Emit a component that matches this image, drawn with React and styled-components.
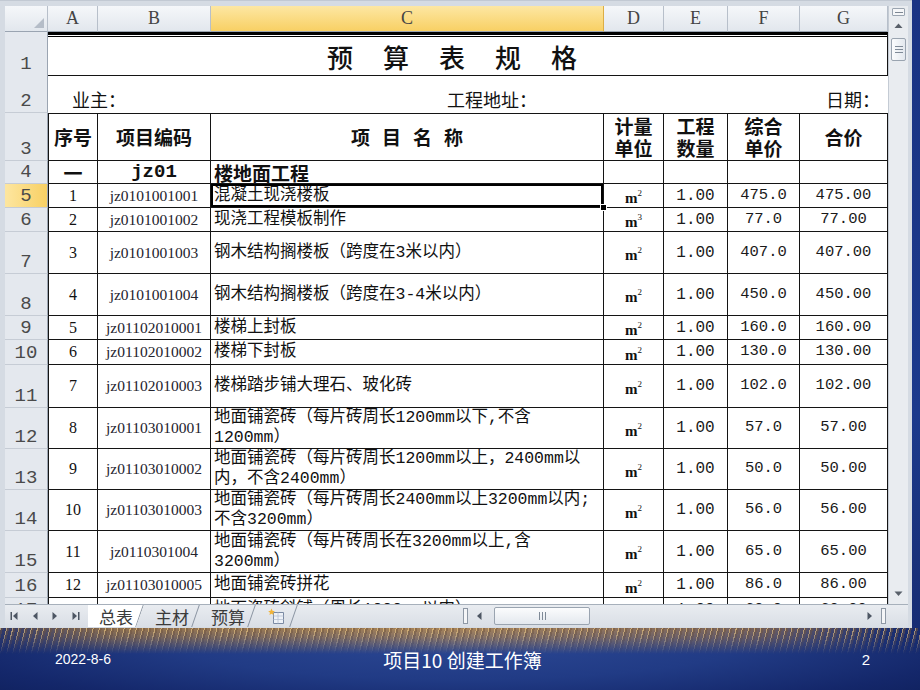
import React from 'react'
import styled, { createGlobalStyle, css } from 'styled-components'

const GlobalStyle = createGlobalStyle`
  html, body { margin: 0; padding: 0; }
  body {
    width: 920px;
    height: 690px;
    overflow: hidden;
    background: #1b3480;
    font-family: "Noto Sans CJK SC", sans-serif;
  }
`

// row header + columns A..G
const COLS = '43px 50px 113px 393px 60px 64px 72px 88px'
const LINE = '#141414'

const Slide = styled.div`
  width: 920px;
  height: 690px;
  display: flex;
  flex-direction: column;
  background: linear-gradient(180deg, #1a3383 0%, #1c3a8c 60%, #16296c 100%);
`
const Top = styled.div`
  display: flex;
  height: 628px;
  flex: none;
`
const Window = styled.div`
  width: 912px;
  height: 628px;
  box-sizing: border-box;
  padding: 5px 4px 1px 5px;
  background: #d5dbe3;
  border-top: 1px solid #c2c9d3;
  display: grid;
  grid-template-columns: 883px 20px;
  grid-template-rows: 598px 23px;
`
const Sheet = styled.div`
  overflow: hidden;
  background: #fff;
  display: flex;
  flex-direction: column;
`
const Row = styled.div`
  display: grid;
  grid-template-columns: ${COLS};
  height: ${p => p.$h}px;
  flex: none;
`
const ColHead = styled.div`
  box-sizing: border-box;
  display: flex;
  align-items: center;
  justify-content: center;
  background: ${p => p.$active
    ? 'linear-gradient(#fde7a3, #f8d064)'
    : 'linear-gradient(#f5f7fa, #e2e7ed)'};
  border-right: 1px solid ${p => p.$active ? '#dcae45' : '#b7bfca'};
  border-bottom: 1px solid #9aa4b1;
  font: 18px "Liberation Serif", serif;
  color: #444;
`
const Corner = styled(ColHead)`
  align-items: flex-end;
  justify-content: flex-end;
  padding: 0 3px 3px 0;
`
const RowHead = styled.div`
  box-sizing: border-box;
  display: flex;
  align-items: flex-end;
  justify-content: center;
  padding-bottom: 1px;
  background: ${p => p.$active ? 'linear-gradient(90deg, #fde6a0, #f8d064)' : '#e4e8ee'};
  border-bottom: 1px solid #c6ccd5;
  border-right: 1px solid #9aa4b1;
  font: 19px/1 "Liberation Mono", monospace;
  color: #4a4a4a;
`
const TitleCell = styled.div`
  grid-column: 2 / -1;
  box-sizing: border-box;
  border-top: 3px solid #000;
  border-bottom: 1px solid ${LINE};
  border-right: 1px solid ${LINE};
  box-shadow: inset 0 1px 0 #fff, inset 0 2px 0 #000;
  display: flex;
  align-items: center;
  padding: 3px 0 0 279px;
  font: 500 26px "Noto Sans CJK SC", sans-serif;
  letter-spacing: 30px;
  color: #111;
`
const InfoCell = styled.div`
  grid-column: 2 / -1;
  display: flex;
  align-items: flex-end;
  padding: 0 8px 1px 24px;
  font: 18px "Noto Sans CJK SC", sans-serif;
  color: #111;
`
const Owner = styled.span`
  width: 375px;
  flex: none;
`
const Address = styled.span`
  flex: 1;
`
const Cell = styled.div`
  box-sizing: border-box;
  min-width: 0;
  display: flex;
  align-items: center;
  justify-content: center;
  padding: 0 2px;
  border-right: 1px solid ${LINE};
  border-bottom: 1px solid ${LINE};
  ${p => p.$first && css`border-left: 1px solid ${LINE};`}
  ${p => p.$top && css`border-top: 1px solid ${LINE};`}
  color: #111;
  white-space: nowrap;
  line-height: 1;
`
const HeadCell = styled(Cell)`
  flex-direction: column;
  font: bold 19px/22px "Noto Sans CJK SC", sans-serif;
  text-align: center;
  ${p => p.$spaced && css`letter-spacing: 12px; padding-left: 14px;`}
`
const SectionCell = styled(Cell)`
  font: bold 19px/1 "Noto Sans CJK SC", sans-serif;
  ${p => p.$left && css`justify-content: flex-start; padding-left: 3px;`}
`
const SectionCode = styled(Cell)`
  font: bold 19px/1 "Liberation Mono", monospace;
`
const SeqCell = styled(Cell)`
  font: 16px/1 "Liberation Serif", serif;
`
const CodeCell = styled(Cell)`
  font: 15.5px/1 "Liberation Serif", serif;
  color: #24242e;
`
const NameCell = styled(Cell)`
  position: relative;
  flex-direction: column;
  align-items: flex-start;
  justify-content: center;
  padding-left: 3px;
  font: 16.5px/20px "Liberation Mono", "Noto Sans CJK SC", monospace;
  ${p => p.$selected && css`box-shadow: inset 0 0 0 2px #000;`}
`
const FillHandle = styled.span`
  position: absolute;
  right: -4px;
  bottom: -4px;
  width: 5px;
  height: 5px;
  background: #000;
  border: 1px solid #fff;
  z-index: 2;
`
const UnitCell = styled(Cell)`
  padding-top: 6px;
`
const Unit = styled.span`
  font: bold 15px/1 "Liberation Serif", serif;
  & sup {
    font-size: 9px;
    font-weight: 400;
    line-height: 0;
    vertical-align: 7px;
  }
`
const NumCell = styled(Cell)`
  font: ${p => p.$size || 15.5}px/1 "Liberation Mono", monospace;
  color: #1a1a1a;
`

/* vertical scrollbar */
const VScroll = styled.div`
  display: flex;
  flex-direction: column;
  background: #e9ecf0;
  border-left: 1px solid #c4cbd4;
`
const SplitBox = styled.div`
  height: 6px;
  margin: 2px 3px 0;
  border: 1px solid #9aa4b0;
  border-radius: 1px;
  background: #f5f6f8;
  display: flex;
  align-items: center;
  justify-content: center;
  &::after {
    content: '';
    width: 8px;
    height: 1px;
    background: #7d8793;
  }
`
const ArrowBtn = styled.div`
  height: 20px;
  flex: none;
  display: flex;
  align-items: center;
  justify-content: center;
`
const VThumb = styled.div`
  height: 23px;
  margin: 2px 2px 0;
  flex: none;
  box-sizing: border-box;
  border: 1px solid #9aa4b0;
  border-radius: 2px;
  background: linear-gradient(90deg, #fbfcfd, #e3e8ee);
  display: flex;
  flex-direction: column;
  align-items: center;
  justify-content: center;
  gap: 2px;
`
const GripLine = styled.span`
  width: 8px;
  height: 1px;
  background: #7f8a97;
`
const Track = styled.div`
  flex: 1;
`

/* sheet tabs + horizontal scrollbar */
const TabBar = styled.div`
  grid-column: 1 / -1;
  display: flex;
  align-items: stretch;
  background: linear-gradient(#e9ecf0, #d9dee5);
  border-top: 1px solid #a7b0bb;
`
const TabArea = styled.div`
  width: 457px;
  flex: none;
  display: flex;
  align-items: stretch;
`
const Nav = styled.div`
  width: 83px;
  flex: none;
  display: flex;
  align-items: center;
  gap: 10px;
  padding-left: 5px;
  box-sizing: border-box;
`
const Tab = styled.div`
  position: relative;
  display: flex;
  align-items: center;
  padding: 0 11px;
  font: 17px/1 "Noto Sans CJK SC", sans-serif;
  color: #3a3a3a;
  ${p => p.$active && css`
    background: #fff;
    clip-path: polygon(0 0, 100% 0, calc(100% - 8px) 100%, 0 100%);
  `}
  &::after {
    content: '';
    position: absolute;
    right: 4px;
    top: 0;
    bottom: 0;
    width: 1px;
    background: #8a94a1;
    transform: skewX(-19deg);
  }
`
const HScroll = styled.div`
  flex: 1;
  display: flex;
  align-items: stretch;
`
const SplitBar = styled.div`
  width: 3px;
  margin: 3px 1px;
  border: 1px solid #8e98a5;
  background: #f4f5f7;
`
const HArrow = styled.div`
  width: 20px;
  flex: none;
  display: flex;
  align-items: center;
  justify-content: center;
`
const HThumb = styled.div`
  width: 96px;
  margin: 2px 0 2px 5px;
  flex: none;
  box-sizing: border-box;
  border: 1px solid #9aa4b0;
  border-radius: 2px;
  background: linear-gradient(#fbfcfd, #e3e8ee);
  display: flex;
  align-items: center;
  justify-content: center;
  gap: 2px;
`
const HGrip = styled.span`
  width: 1px;
  height: 8px;
  background: #7f8a97;
`
const EndMark = styled.div`
  width: 3px;
  margin: 3px 1px;
  border: 1px solid #8e98a5;
  background: #f4f5f7;
`
const CornerBox = styled.div`
  width: 21px;
  flex: none;
`

/* slide footer */
const Footer = styled.div`
  position: relative;
  flex: 1;
  display: grid;
  grid-template-columns: 1fr auto 1fr;
  align-items: center;
  padding: 2px 50px 2px 55px;
  color: #fff;
  background: radial-gradient(ellipse 70% 140% at 50% 20%, #2c4894 0%, #213b85 45%, #14276a 80%, #0f205c 100%);
  &::before {
    content: '';
    position: absolute;
    left: 0;
    right: 0;
    top: 0;
    height: 26px;
    background:
      repeating-linear-gradient(104deg, rgba(240, 200, 126, 0.7) 0 1px, rgba(120, 88, 58, 0.5) 1px 3px, transparent 3px 6px),
      linear-gradient(90deg, rgba(70, 70, 100, 0.5) 0%, rgba(150, 116, 76, 0.95) 12%, rgba(176, 136, 86, 0.95) 50%, rgba(140, 108, 84, 0.8) 82%, rgba(40, 50, 100, 0.2) 97%);
    -webkit-mask-image: linear-gradient(to bottom, #000 0%, rgba(0, 0, 0, 0.75) 35%, transparent 100%);
    mask-image: linear-gradient(to bottom, #000 0%, rgba(0, 0, 0, 0.75) 35%, transparent 100%);
  }
`
const FootDate = styled.span`
  position: relative;
  font: 14px "Liberation Sans", sans-serif;
  justify-self: start;
`
const FootTitle = styled.span`
  position: relative;
  font: 19px "Noto Sans CJK SC", sans-serif;
`
const FootPage = styled.span`
  position: relative;
  font: 15px "Liberation Sans", sans-serif;
  justify-self: end;
`

const Arrow = ({ dir }) => {
  const d = {
    up: 'M0.5 5 L4.5 0.5 L8.5 5Z',
    down: 'M0.5 0.5 L4.5 5 L8.5 0.5Z',
  }[dir]
  return (
    <svg width="9" height="6" viewBox="0 0 9 6">
      <path d={d} fill="#59606a" />
    </svg>
  )
}

const Tri = ({ left, bar }) => (
  <svg width="10" height="10" viewBox="0 0 10 10">
    {left
      ? <path d="M7.5 1 L3 5 L7.5 9Z" fill="#4d5663" />
      : <path d="M2.5 1 L7 5 L2.5 9Z" fill="#4d5663" />}
    {bar && <rect x={left ? 0.5 : 8} y="1" width="1.5" height="8" fill="#4d5663" />}
  </svg>
)

const NewSheetIcon = () => (
  <svg width="20" height="17" viewBox="0 0 20 17">
    <path d="M6.5 4.5h10v11h-10z" fill="#eef2f8" stroke="#7b8aa3" />
    <path d="M6.5 8h10M6.5 11.5h10M11 4.5v11" stroke="#b7c2d2" strokeWidth="0.8" />
    <path d="M4.5 0.5l1 2.3 2.4.4-1.8 1.5.6 2.3-2.2-1.2-2.1 1.2.6-2.3L1.2 3.2l2.3-.4z" fill="#f2b43a" />
  </svg>
)

const items = [
  { n: 5, h: 24, seq: '1', code: 'jz0101001001', name: '混凝土现浇楼板', u: '2', price: '475.0', total: '475.00', sel: true },
  { n: 6, h: 24, seq: '2', code: 'jz0101001002', name: '现浇工程模板制作', u: '3', price: '77.0', total: '77.00' },
  { n: 7, h: 42, seq: '3', code: 'jz0101001003', name: '钢木结构搁楼板（跨度在3米以内）', u: '2', price: '407.0', total: '407.00' },
  { n: 8, h: 42, seq: '4', code: 'jz0101001004', name: '钢木结构搁楼板（跨度在3-4米以内）', u: '2', price: '450.0', total: '450.00' },
  { n: 9, h: 24, seq: '5', code: 'jz01102010001', name: '楼梯上封板', u: '2', price: '160.0', total: '160.00' },
  { n: 10, h: 25, seq: '6', code: 'jz01102010002', name: '楼梯下封板', u: '2', price: '130.0', total: '130.00' },
  { n: 11, h: 43, seq: '7', code: 'jz01102010003', name: '楼梯踏步铺大理石、玻化砖', u: '2', price: '102.0', total: '102.00' },
  { n: 12, h: 41, seq: '8', code: 'jz01103010001', name: ['地面铺瓷砖（每片砖周长1200mm以下,不含', '1200mm）'], u: '2', price: '57.0', total: '57.00' },
  { n: 13, h: 41, seq: '9', code: 'jz01103010002', name: ['地面铺瓷砖（每片砖周长1200mm以上，2400mm以', '内，不含2400mm）'], u: '2', price: '50.0', total: '50.00' },
  { n: 14, h: 41, seq: '10', code: 'jz01103010003', name: ['地面铺瓷砖（每片砖周长2400mm以上3200mm以内;', '不含3200mm）'], u: '2', price: '56.0', total: '56.00' },
  { n: 15, h: 42, seq: '11', code: 'jz0110301004', name: ['地面铺瓷砖（每片砖周长在3200mm以上,含', '3200mm）'], u: '2', price: '65.0', total: '65.00' },
  { n: 16, h: 25, seq: '12', code: 'jz01103010005', name: '地面铺瓷砖拼花', u: '2', price: '86.0', total: '86.00' },
  { n: 17, h: 24, seq: '13', code: 'jz01103010006', name: '地面瓷砖斜铺（周长1000mm以内）', u: '2', price: '60.0', total: '60.00' },
]

const ItemRow = ({ it }) => {
  const lines = Array.isArray(it.name) ? it.name : [it.name]
  return (
    <Row $h={it.h}>
      <RowHead $active={it.sel}>{it.n}</RowHead>
      <SeqCell $first>{it.seq}</SeqCell>
      <CodeCell>{it.code}</CodeCell>
      <NameCell $selected={it.sel}>
        {lines.map(l => <span key={l}>{l}</span>)}
        {it.sel && <FillHandle />}
      </NameCell>
      <UnitCell><Unit>m<sup>{it.u}</sup></Unit></UnitCell>
      <NumCell $size={16}>1.00</NumCell>
      <NumCell>{it.price}</NumCell>
      <NumCell>{it.total}</NumCell>
    </Row>
  )
}

export default function App() {
  return (
    <>
      <GlobalStyle />
      <Slide>
        <Top>
          <Window>
            <Sheet>
              <Row $h={26}>
                <Corner>
                  <svg width="10" height="10" viewBox="0 0 10 10">
                    <path d="M10 0 L10 10 L0 10Z" fill="#b5bdc8" />
                  </svg>
                </Corner>
                {['A', 'B', 'C', 'D', 'E', 'F', 'G'].map(l => (
                  <ColHead key={l} $active={l === 'C'}>{l}</ColHead>
                ))}
              </Row>
              <Row $h={43}>
                <RowHead>1</RowHead>
                <TitleCell>预算表规格</TitleCell>
              </Row>
              <Row $h={38}>
                <RowHead>2</RowHead>
                <InfoCell>
                  <Owner>业主：</Owner>
                  <Address>工程地址：</Address>
                  <span>日期：</span>
                </InfoCell>
              </Row>
              <Row $h={48}>
                <RowHead>3</RowHead>
                <HeadCell $first $top>序号</HeadCell>
                <HeadCell $top>项目编码</HeadCell>
                <HeadCell $top $spaced>项目名称</HeadCell>
                <HeadCell $top><span>计量</span><span>单位</span></HeadCell>
                <HeadCell $top><span>工程</span><span>数量</span></HeadCell>
                <HeadCell $top><span>综合</span><span>单价</span></HeadCell>
                <HeadCell $top>合价</HeadCell>
              </Row>
              <Row $h={23}>
                <RowHead>4</RowHead>
                <SectionCell $first>一</SectionCell>
                <SectionCode>jz01</SectionCode>
                <SectionCell $left>楼地面工程</SectionCell>
                <Cell />
                <Cell />
                <Cell />
                <Cell />
              </Row>
              {items.map(it => <ItemRow key={it.n} it={it} />)}
            </Sheet>

            <VScroll>
              <SplitBox />
              <ArrowBtn><Arrow dir="up" /></ArrowBtn>
              <VThumb><GripLine /><GripLine /><GripLine /></VThumb>
              <Track />
              <ArrowBtn><Arrow dir="down" /></ArrowBtn>
            </VScroll>

            <TabBar>
              <TabArea>
                <Nav>
                  <Tri left bar />
                  <Tri left />
                  <Tri />
                  <Tri bar />
                </Nav>
                <Tab $active>总表</Tab>
                <Tab>主材</Tab>
                <Tab>预算</Tab>
                <Tab><NewSheetIcon /></Tab>
              </TabArea>
              <HScroll>
                <SplitBar />
                <HArrow><Tri left /></HArrow>
                <HThumb><HGrip /><HGrip /><HGrip /></HThumb>
                <Track />
                <HArrow><Tri /></HArrow>
                <EndMark />
                <CornerBox />
              </HScroll>
            </TabBar>
          </Window>
        </Top>
        <Footer>
          <FootDate>2022-8-6</FootDate>
          <FootTitle>项目10 创建工作簿</FootTitle>
          <FootPage>2</FootPage>
        </Footer>
      </Slide>
    </>
  )
}
